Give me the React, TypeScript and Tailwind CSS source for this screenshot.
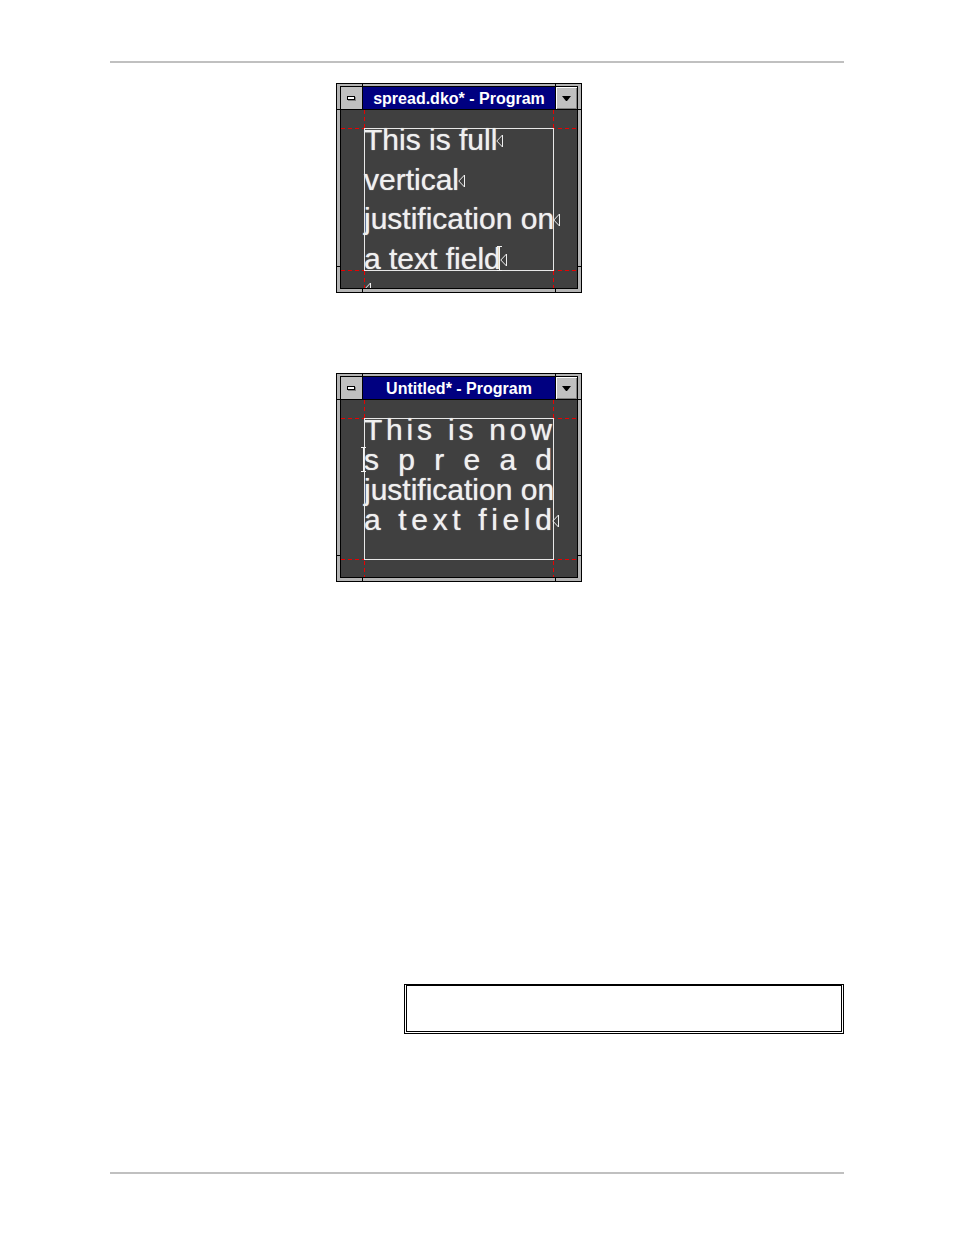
import React, {ReactNode} from 'react'
import clsx from 'clsx'

interface LineProps {
	text: string
	marker?: boolean
	spread?: boolean
	caret?: 'start' | 'end'
}

interface ProgramWindowProps {
	title: string
	fieldClassName: string
	lines: LineProps[]
	children?: ReactNode
}

const fullLines: LineProps[] = [
	{text: 'This is full', marker: true},
	{text: 'vertical', marker: true},
	{text: 'justification on', marker: true},
	{text: 'a text field', marker: true, caret: 'end'},
]

const spreadLines: LineProps[] = [
	{text: 'This is now', spread: true},
	{text: 'spread', spread: true, caret: 'start'},
	{text: 'justification on'},
	{text: 'a text field', spread: true, marker: true},
]

function ReturnMarker({className}: {className?: string}) {
	return (
		<svg
			viewBox="0 0 7 14"
			className={clsx('absolute h-3.5 w-[7px]', className)}
			fill="none"
			stroke="#f0f0f0">
			<path d="M6.5 1v12L.8 7z" />
		</svg>
	)
}

function Caret({className}: {className?: string}) {
	return (
		<svg
			viewBox="0 0 7 25"
			className={clsx('absolute h-[25px] w-[7px]', className)}
			fill="none"
			stroke="#f4f4f4">
			<path d="M1 .5h5M3.5 0v25M1 24.5h5" />
		</svg>
	)
}

function Line({text, marker, spread, caret}: LineProps) {
	return (
		<p className={clsx('relative flex whitespace-pre leading-6', spread ? 'justify-between' : 'w-fit')}>
			{spread ? text.split('').map((letter, key) => <span key={key}>{letter}</span>) : text}
			{marker && <ReturnMarker className={clsx('top-1.5', spread ? 'left-full' : '-right-1.5')} />}
			{caret === 'start' && <Caret className="-left-1 -top-px" />}
			{caret === 'end' && <Caret className="-right-0.5 -top-px" />}
		</p>
	)
}

const horizontalGuide =
	'absolute -inset-x-[23px] -z-10 h-px bg-[repeating-linear-gradient(90deg,#e80000_0_4px,transparent_4px_7px)]'
const verticalGuide =
	'absolute -inset-y-[18px] -z-10 w-px bg-[repeating-linear-gradient(180deg,#e80000_0_4px,transparent_4px_7px)]'

// The guides run through the edges of the text field, out to the window frame
function Guides() {
	return (
		<>
			<span className={clsx(horizontalGuide, 'top-0')} />
			<span className={clsx(horizontalGuide, 'bottom-0')} />
			<span className={clsx(verticalGuide, 'left-0')} />
			<span className={clsx(verticalGuide, 'right-0')} />
		</>
	)
}

function Notches() {
	return (
		<>
			<span className="absolute inset-y-0 left-[25px] w-px bg-black" />
			<span className="absolute inset-y-0 right-[25px] w-px bg-black" />
			<span className="absolute inset-x-0 top-[25px] h-px bg-black" />
			<span className="absolute inset-x-0 bottom-[25px] h-px bg-black" />
		</>
	)
}

function ProgramWindow({title, fieldClassName, lines, children}: ProgramWindowProps) {
	return (
		<section className="relative w-fit border border-black bg-[#b4b4b4] px-[3px] pb-[3px] pt-0.5">
			<Notches />
			<div className="relative border border-black">
				<header className="flex h-[23px] border-b border-black bg-[#000080]">
					<button
						type="button"
						aria-label="Control menu"
						className="flex w-[22px] items-center justify-center border-r border-black bg-[#c0c0c0]">
						<svg
							viewBox="0 0 9 5"
							className="h-[5px] w-[9px]"
							shapeRendering="crispEdges">
							<path
								d="M1 1h8v4H1z"
								fill="#808080"
							/>
							<path d="M0 0h8v4H0z" />
							<path
								d="M1 1h6v2H1z"
								fill="#fff"
							/>
						</svg>
					</button>
					<h2 className="flex-1 text-center text-base font-bold leading-6 text-white">{title}</h2>
					<button
						type="button"
						aria-label="Minimize"
						className="flex w-[22px] items-center justify-center border-l border-black bg-[#c0c0c0] shadow-[inset_1px_1px_#fff,inset_-1px_-1px_#808080]">
						<svg
							viewBox="0 0 9 5"
							className="h-[5px] w-[9px]">
							<path d="M0 0h9L5 5H4z" />
						</svg>
					</button>
				</header>
				<div className="relative overflow-hidden bg-[#404040] px-[23px] pb-[17px] pt-[18px]">
					<div
						className={clsx(
							'relative isolate flex w-[190px] flex-col pr-0.5 text-[30px] text-[#f0f0f0] outline-1 -outline-offset-1 outline-[#e8e8e8] [text-shadow:0_0_1px_#d0d0d0]',
							fieldClassName,
						)}>
						<Guides />
						{lines.map((line) => (
							<Line
								key={line.text}
								{...line}
							/>
						))}
					</div>
					{children}
				</div>
			</div>
		</section>
	)
}

function App() {
	return (
		<div className="flex min-h-screen flex-col bg-white px-[110px] py-[61px] font-['Liberation_Sans',Arial,sans-serif]">
			<hr className="border-t-2 border-[#c0c0c0]" />
			<main className="flex flex-col pt-5">
				<div className="ml-[226px] flex flex-col gap-20">
					<ProgramWindow
						title="spread.dko* - Program"
						fieldClassName="h-[143px] justify-between"
						lines={fullLines}>
						<ReturnMarker className="-bottom-2 left-[23px]" />
					</ProgramWindow>
					<ProgramWindow
						title="Untitled* - Program"
						fieldClassName="h-[142px] gap-1.5"
						lines={spreadLines}
					/>
				</div>
				<aside className="ml-[294px] mt-[402px] border border-black px-px pb-px">
					<div className="h-[47px] border border-black" />
				</aside>
			</main>
			<hr className="mt-auto border-t-2 border-[#c0c0c0]" />
		</div>
	)
}

export default App
